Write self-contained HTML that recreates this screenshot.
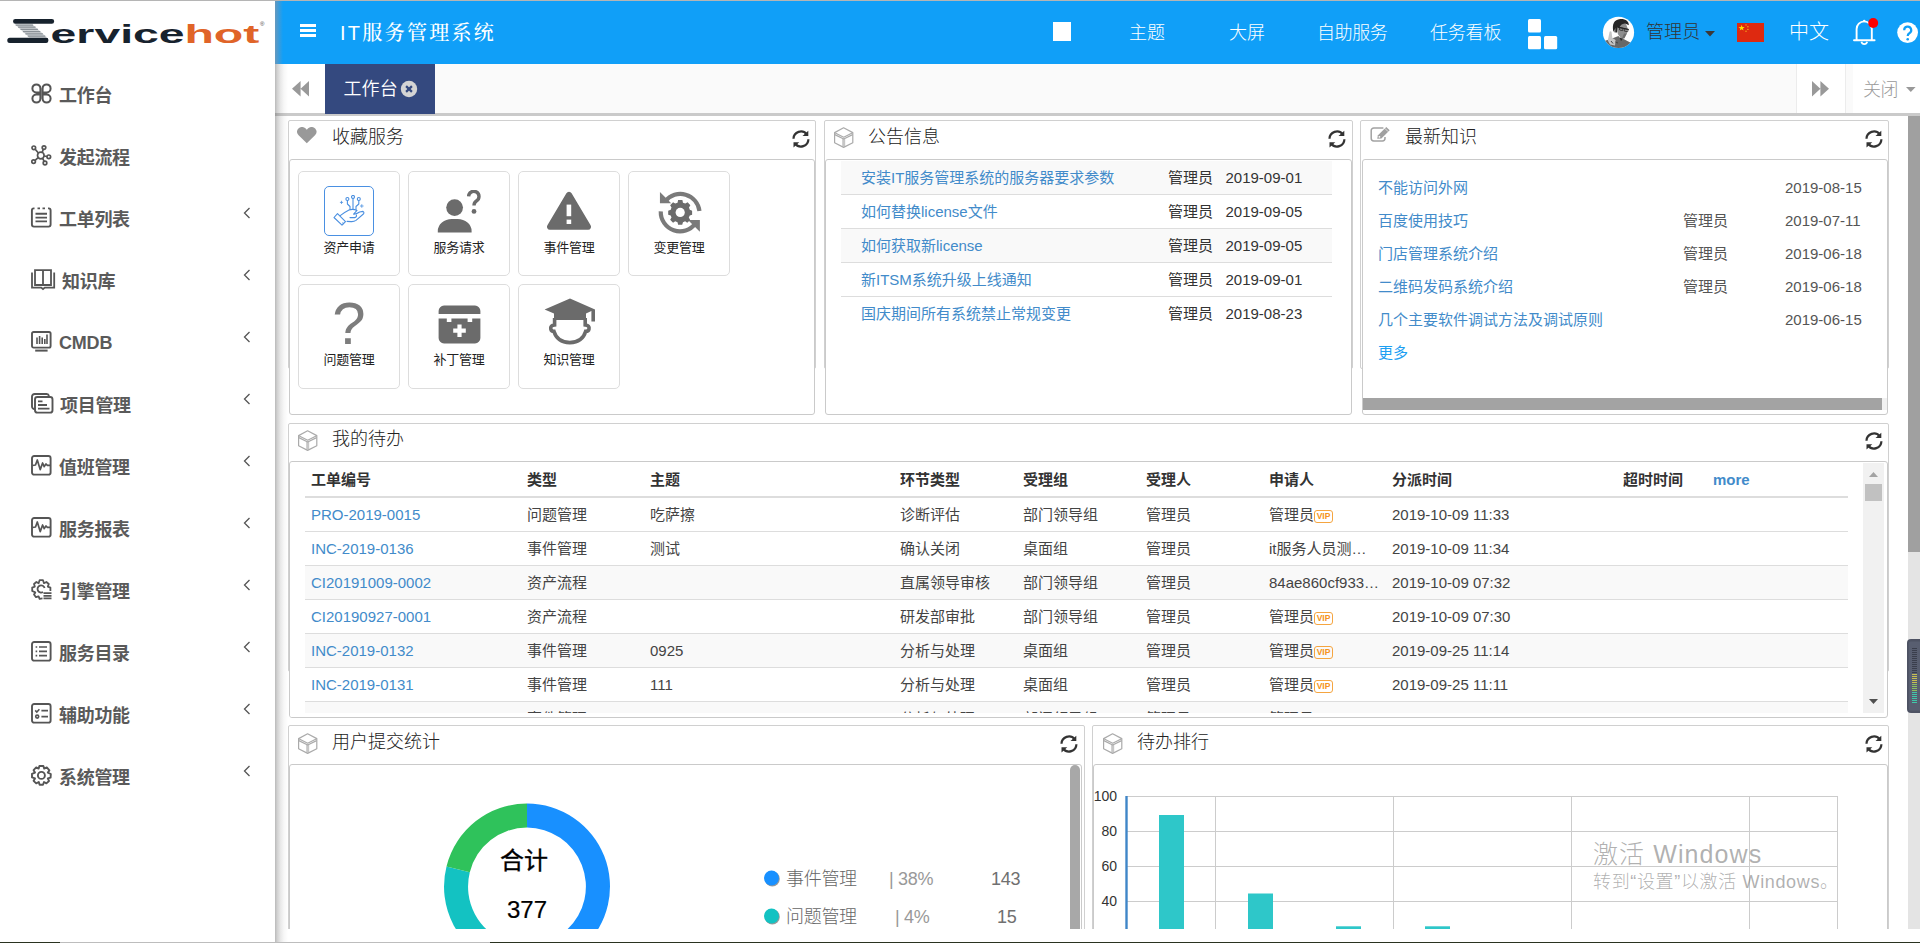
<!DOCTYPE html>
<html lang="zh-CN">
<head>
<meta charset="utf-8">
<title>IT服务管理系统</title>
<style>
*{box-sizing:border-box;margin:0;padding:0}
html,body{width:1920px;height:943px;overflow:hidden;background:#fff}
body{position:relative;font-family:"Liberation Sans","Noto Sans CJK SC",sans-serif;font-size:14px;color:#333}
.abs{position:absolute}
a{color:#428bca;text-decoration:none}
#topline{left:0;top:0;width:1920px;height:1px;background:#b5b5b5;z-index:50}
#botline{left:0;top:942px;width:1920px;height:1px;background:#2a3320;z-index:50}
#botline i{position:absolute;top:0;height:1px;background:#bdbdbd}
/* sidebar */
#side{left:0;top:1px;width:275px;height:941px;background:#fff;z-index:5}
#sideshadow{left:275px;top:64px;width:13px;height:878px;background:linear-gradient(to right,rgba(90,90,90,.42) 0,rgba(90,90,90,.27) 18%,rgba(90,90,90,.14) 42%,rgba(90,90,90,.05) 68%,rgba(90,90,90,0) 100%);z-index:20}
.mi{position:absolute;left:0;width:275px;height:30px;font-weight:bold;font-size:18px;color:#5a5a5a;line-height:30px}
.mi svg.ic{position:absolute;left:31px;top:3px;overflow:visible}
.mi span{position:absolute;left:59px;top:1px;white-space:nowrap;letter-spacing:-.3px}
.mi svg.ch{position:absolute;left:243px;top:3px}
/* header */
#hdr{left:275px;top:1px;width:1645px;height:63px;background:#109ff8;z-index:4}
#hdrshade{left:275px;top:1px;width:8px;height:63px;background:linear-gradient(to right,rgba(130,150,170,.75),rgba(16,159,248,0));z-index:6}
.hn{position:absolute;top:0;height:63px;line-height:64px;color:#fff;font-size:18px;font-weight:300;white-space:nowrap}
/* tabbar */
#tabbar{left:275px;top:64px;width:1645px;height:50px;background:#fafafa;z-index:3}
#tabline{left:275px;top:113.3px;width:1645px;height:2.4px;background:#cacaca;z-index:3}
#tab{left:325px;top:64px;width:110px;height:50px;background:#34497f;color:#fff;font-size:18px;line-height:51px;z-index:4;font-family:'Liberation Sans','Noto Sans CJK SC DemiLight','Noto Sans CJK SC',sans-serif}
/* content */
.panel{position:absolute;border:1px solid #d0d0d0;background:#fff;border-radius:2px}
.pbody{position:absolute;border:1px solid #cacaca;background:#fff;border-radius:3px;overflow:hidden}
.ptitle{position:absolute;font-size:17px;color:#222;white-space:nowrap;font-weight:300;line-height:24px}
.rf{position:absolute;width:18px;height:18px;overflow:visible}
</style>
</head>
<body>
<div id="topline" class="abs"></div>
<svg width="0" height="0" style="position:absolute">
<defs>
<g id="rfi"><path d="M2.5 8.7A7.4 7.4 0 0 1 15.7 4.3" fill="none" stroke="#333" stroke-width="2.2"/><path d="M17.3 .7V6H11.5Z" fill="#333"/><path d="M17.4 9.3A7.4 7.4 0 0 1 4.2 13.7" fill="none" stroke="#333" stroke-width="2.2"/><path d="M2.5 17.5V12.2H8.3Z" fill="#333"/></g>
<g id="cubei" fill="none" stroke="#aaa" stroke-width="1.2" stroke-linejoin="round"><path d="M10.7 11.4V19.6" stroke="#c6c6c6" stroke-width="3"/><path d="M10.6 .8L19.8 5.6V15.8L10.6 20.4L1.6 15.8V5.6Z"/><path d="M1.8 5.8L10.7 10.2L19.6 5.8"/><path d="M1.8 7.6L10.7 12L19.6 7.6"/></g>
</defs>
</svg>
<div id="side" class="abs">
<!-- logo -->
<svg class="abs" style="left:6px;top:14px" width="264" height="36" viewBox="0 0 264 36" role="img" aria-label="Servicehot"><title>Servicehot</title>
  <path d="M8.8 9.2H26.2L41.4 22.8H23.6Z" fill="#cfd3d6"/>
  <path d="M9.7 10.0h17.4M12.1 12.2h17.4M14.5 14.4h17.4M16.9 16.6h17.4M19.4 18.8h17.4M21.8 21.0h17.4" stroke="#8a9197" stroke-width="1.25" fill="none"/>
  <rect x="7.1" y="3.9" width="41" height="4.9" rx="2.2" fill="#17222d"/>
  <rect x="1.3" y="22.8" width="41" height="5.2" rx="2.5" fill="#17222d"/>
  <path d="M36 22.9L41.6 22.9L42.3 25L40 27.9Z" fill="#17222d"/>
  <text x="44.6" y="28" font-family="Liberation Sans, sans-serif" font-weight="bold" font-size="26.5" fill="#17222d" textLength="134" lengthAdjust="spacingAndGlyphs">ervice</text>
  <text x="178.4" y="28" font-family="Liberation Sans, sans-serif" font-weight="bold" font-size="26.5" fill="#e06428" textLength="75" lengthAdjust="spacingAndGlyphs">hot</text>
  <text x="254" y="11" font-family="Liberation Sans, sans-serif" font-size="6" fill="#444">®</text>
</svg>
<div class="mi" style="top:79px"><svg class="ic" width="21" height="21" viewBox="0 0 21 21" fill="none" stroke="#555" stroke-width="2.0"><path d="M9.4 9.4H5.4A4 4 0 1 1 9.4 5.4ZM11.6 9.4V5.4A4 4 0 1 1 15.6 9.4ZM9.4 11.6V15.6A4 4 0 1 1 5.4 11.6ZM11.6 11.6H15.6A4 4 0 1 1 11.6 15.6Z"/></svg><span>工作台</span></div>
<div class="mi" style="top:141px"><svg class="ic" width="21" height="21" viewBox="0 0 21 21" fill="none" stroke="#555" stroke-width="1.7"><circle cx="9.8" cy="10.5" r="3.3"/><circle cx="2.8" cy="2.8" r="1.8"/><circle cx="13" cy="2.6" r="1.8"/><circle cx="17.8" cy="11.8" r="1.8"/><circle cx="14" cy="18" r="1.8"/><circle cx="2.6" cy="16.6" r="1.8"/><path d="M4.2 4.2L7.4 8M12.3 4.3L11.2 7.4M16 11.5L13.1 11M13.2 16.4L11.6 13.4M4.1 15.4L7.1 12.7"/></svg><span>发起流程</span></div>
<div class="mi" style="top:203px"><svg class="ic" width="21" height="21" viewBox="0 0 21 21" fill="none" stroke="#555" stroke-width="1.9"><path d="M3.5 1.4H2.8A2 2 0 0 0 .9 3.4V17.6A2 2 0 0 0 2.9 19.6H17.6A2 2 0 0 0 19.6 17.6V3.4A2 2 0 0 0 17.7 1.4H17"/><path d="M6.5 1.4H9M11.5 1.4H14" /><path d="M4.5 6.8H16M4.5 10.6H16M4.5 14.4H16"/></svg><span>工单列表</span><svg class="ch" width="8" height="12" viewBox="0 0 8 12" fill="none" stroke="#555" stroke-width="1.3"><path d="M6.5 1L1.5 6L6.5 11"/></svg></div>
<div class="mi" style="top:265px"><svg class="ic" width="25" height="21" viewBox="0 0 25 21" fill="none" stroke="#555" stroke-width="1.8"><path d="M4 1.2H20V16H4ZM12 1.2V16"/><path d="M1 3.5V18.6H10.2L12 20L13.8 18.6H23.2V3.5"/></svg><span style="left:62px">知识库</span><svg class="ch" width="8" height="12" viewBox="0 0 8 12" fill="none" stroke="#555" stroke-width="1.3"><path d="M6.5 1L1.5 6L6.5 11"/></svg></div>
<div class="mi" style="top:327px"><svg class="ic" width="21" height="21" viewBox="0 0 21 21" fill="none" stroke="#555" stroke-width="1.9"><rect x="1" y="1" width="18.6" height="15.6" rx="1.6"/><path d="M4.2 19.6H16.6" stroke-width="2.0"/><path d="M6 6.5V13M8.6 5V13M11.2 6.5V13M13.8 8V13M16 3.5V13" stroke-width="1.6"/></svg><span style="top:0;letter-spacing:-.2px">CMDB</span><svg class="ch" width="8" height="12" viewBox="0 0 8 12" fill="none" stroke="#555" stroke-width="1.3"><path d="M6.5 1L1.5 6L6.5 11"/></svg></div>
<div class="mi" style="top:389px"><svg class="ic" width="23" height="21" viewBox="0 0 23 21" fill="none" stroke="#555" stroke-width="1.9"><path d="M3.6 16.2A2.6 2.6 0 0 1 1 13.6V3.6A2.6 2.6 0 0 1 3.6 1H15.6A2.6 2.6 0 0 1 18 3"/><rect x="4" y="4" width="17.5" height="15.6" rx="2.4"/><path d="M7 8.4H11.5M7 12H16M7 15.6H18.5" stroke-width="1.8"/></svg><span style="left:60px">项目管理</span><svg class="ch" width="8" height="12" viewBox="0 0 8 12" fill="none" stroke="#555" stroke-width="1.3"><path d="M6.5 1L1.5 6L6.5 11"/></svg></div>
<div class="mi" style="top:451px"><svg class="ic" width="21" height="21" viewBox="0 0 21 21" fill="none" stroke="#555" stroke-width="1.9"><rect x="1" y="1" width="18.6" height="18.6" rx="2.2"/><path d="M1.5 10.5L4.5 10L6.3 5L9.2 14.6L11.6 8L13.2 11.6L15 9L16.4 10.4H19" stroke-width="1.7" stroke-linejoin="round"/></svg><span>值班管理</span><svg class="ch" width="8" height="12" viewBox="0 0 8 12" fill="none" stroke="#555" stroke-width="1.3"><path d="M6.5 1L1.5 6L6.5 11"/></svg></div>
<div class="mi" style="top:513px"><svg class="ic" width="21" height="21" viewBox="0 0 21 21" fill="none" stroke="#555" stroke-width="1.9"><rect x="1" y="1" width="18.6" height="18.6" rx="2.2"/><path d="M1.5 10.5L4.5 10L6.3 5L9.2 14.6L11.6 8L13.2 11.6L15 9L16.4 10.4H19" stroke-width="1.7" stroke-linejoin="round"/></svg><span>服务报表</span><svg class="ch" width="8" height="12" viewBox="0 0 8 12" fill="none" stroke="#555" stroke-width="1.3"><path d="M6.5 1L1.5 6L6.5 11"/></svg></div>
<div class="mi" style="top:575px"><svg class="ic" width="21" height="21" viewBox="0 0 21 21" fill="none" stroke="#555" stroke-width="1.8" stroke-linejoin="round"><path d="M11.5 19.4L8.6 19.8L7.6 17.3L5 18.2L3 15.4L4.3 13.4L1.2 12L1.2 8.6L3.8 7.6L3 5L5.4 3L7.6 4.2L8.6 1.2H12L13 4.2L15.4 3L17.8 5L16.8 7.6L19.4 8.6V12"/><path d="M12 13A3.6 3.6 0 1 1 13.6 9"/><path d="M12.5 14.2H20.5M12.5 16.8H20.5M12.5 19.4H20.5" stroke-width="1.7"/></svg><span>引擎管理</span><svg class="ch" width="8" height="12" viewBox="0 0 8 12" fill="none" stroke="#555" stroke-width="1.3"><path d="M6.5 1L1.5 6L6.5 11"/></svg></div>
<div class="mi" style="top:637px"><svg class="ic" width="21" height="21" viewBox="0 0 21 21" fill="none" stroke="#555" stroke-width="1.9"><rect x="1" y="1" width="18.6" height="18.6" rx="2.2"/><path d="M8 6H16M8 10.3H16M8 14.6H16" stroke-width="1.7"/><path d="M4.6 6H6.2M4.6 10.3H6.2M4.6 14.6H6.2" stroke-width="1.7"/></svg><span>服务目录</span><svg class="ch" width="8" height="12" viewBox="0 0 8 12" fill="none" stroke="#555" stroke-width="1.3"><path d="M6.5 1L1.5 6L6.5 11"/></svg></div>
<div class="mi" style="top:699px"><svg class="ic" width="21" height="21" viewBox="0 0 21 21" fill="none" stroke="#555" stroke-width="1.9"><rect x="1" y="1" width="18.6" height="18.6" rx="2.2"/><path d="M4.2 7.4L5.8 9L8.4 6.2" stroke-width="1.6"/><circle cx="6.2" cy="13.6" r="1.5" stroke-width="1.6"/><path d="M10.4 7.6H17M10.4 13.6H17" stroke-width="1.7"/></svg><span>辅助功能</span><svg class="ch" width="8" height="12" viewBox="0 0 8 12" fill="none" stroke="#555" stroke-width="1.3"><path d="M6.5 1L1.5 6L6.5 11"/></svg></div>
<div class="mi" style="top:761px"><svg class="ic" width="21" height="21" viewBox="0 0 21 21" fill="none" stroke="#555" stroke-width="1.9" stroke-linejoin="round"><path d="M8.4 1H12.4L13.2 3.6L15.8 2.4L18.4 5.4L16.8 7.6L19.8 9L19.6 12.6L16.8 13.4L18 16L15.4 18.4L13 17L12 19.8H8.6L7.8 17L5.2 18.4L2.6 15.8L4 13.4L1 12.4V8.8L4 7.6L2.6 5.2L5.2 2.4L7.6 3.6Z"/><circle cx="10.4" cy="10.4" r="3.5"/></svg><span>系统管理</span><svg class="ch" width="8" height="12" viewBox="0 0 8 12" fill="none" stroke="#555" stroke-width="1.3"><path d="M6.5 1L1.5 6L6.5 11"/></svg></div>
</div>
<div id="hdr" class="abs">
  <!-- coordinates inside hdr are page x-275, page y-1 -->
  <svg class="abs" style="left:25px;top:23px" width="16" height="13" viewBox="0 0 16 13"><path d="M0 0H16V3H0ZM0 5H16V8H0ZM0 10H16V13H0Z" fill="#fff"/></svg>
  <div class="abs" style="left:65px;top:0;height:63px;line-height:64px;color:#fff;font-family:'Liberation Sans','Noto Serif CJK SC',serif;font-size:20px;letter-spacing:2.3px;white-space:nowrap;font-weight:500">IT服务管理系统</div>
  <div class="abs" style="left:778px;top:21px;width:18px;height:19px;background:#fff"></div>
  <div class="hn" style="left:854px">主题</div>
  <div class="hn" style="left:954px">大屏</div>
  <div class="hn" style="left:1042px;letter-spacing:-.4px">自助服务</div>
  <div class="hn" style="left:1155px;letter-spacing:-.2px">任务看板</div>
  <svg class="abs" style="left:1253px;top:18px" width="30" height="31" viewBox="0 0 30 31" fill="#fff"><rect x="0" y="0" width="13" height="13.4" rx="1.5"/><rect x="0" y="17" width="13" height="13.2" rx="1.5"/><rect x="16" y="17" width="13.2" height="13.2" rx="1.5"/></svg>
  <!-- avatar -->
  <svg class="abs" style="left:1327px;top:15px" width="33" height="33" viewBox="0 0 33 33">
    <defs><clipPath id="avc"><circle cx="16.5" cy="16.4" r="15.6"/></clipPath></defs>
    <circle cx="16.5" cy="16.4" r="15.6" fill="#fefefe"/>
    <g clip-path="url(#avc)">
      <path d="M3 24.8L10 22.4L16.5 20L19 23.6L21.6 23L28.2 26.6L31 33H2Z" fill="#686868"/>
      <path d="M15.4 11C17 7.4 21 6.8 24.2 8.2L25.6 12.2L25 17.2L22.2 22.4L19 22.4L15.8 18Z" fill="#8e8e8e"/>
      <path d="M22 17.5L24.6 17.8L22.4 22.2L20 22.4Z" fill="#6e6e6e"/>
      <ellipse cx="12.9" cy="14.2" rx="1.5" ry="2.4" fill="#8a8a8a"/>
      <path d="M11.4 15.4C9.8 8.4 12 3.4 18.3 2.9C23.4 2.6 27.2 5.2 26.8 9.2L24.4 8C21.6 7 19 8 17.6 11L15.6 11.6L15.2 16.4L13.4 16.4L13.6 12Z" fill="#262626"/>
      <path d="M16 11.1L26.8 13.5" stroke="#1e1e1e" stroke-width="1.2" fill="none"/>
      <path d="M17.4 11.6L21 12.4L20.6 14.6L17.6 14ZM22.4 12.8L26.2 13.6L25.6 15.8L22.2 15Z" fill="none" stroke="#2a2a2a" stroke-width=".8"/>
      <path d="M17.4 21.4L19 25L21.2 22.8Z" fill="#2c2c2c"/>
      <path d="M7.6 15.8Q8.5 14.6 9.5 15.8L10.4 22L13.6 24L13 29.6L8 28.6L5.8 24.4Z" fill="#c4c4c4"/>
      <path d="M9 25L11 27.5M13.5 26L16 27" stroke="#444" stroke-width="1" fill="none"/>
    </g>
  </svg>
  <div class="hn" style="left:1371px;color:#333;letter-spacing:.1px;line-height:63px">管理员</div>
  <svg class="abs" style="left:1430px;top:30px" width="10" height="6" viewBox="0 0 10 6"><path d="M0 0H10L5 5.4Z" fill="#3c3838"/></svg>
  <svg class="abs" style="left:1462px;top:22px" width="27" height="19" viewBox="0 0 27 19"><rect width="27" height="19" fill="#de2910"/><path d="M4.6 1.8L5.4 4H7.7L5.9 5.4L6.6 7.6L4.6 6.3L2.7 7.6L3.4 5.4L1.5 4H3.9Z" fill="#ffde00"/><g fill="#f6b21a"><circle cx="9" cy="1.9" r=".7"/><circle cx="10.9" cy="3.7" r=".7"/><circle cx="10.9" cy="6.4" r=".7"/><circle cx="9" cy="8.2" r=".7"/></g></svg>
  <div class="hn" style="left:1514px;font-size:20px;line-height:63px">中文</div>
  <svg class="abs" style="left:1577px;top:13px" width="30" height="32" viewBox="0 0 30 32"><path d="M2 26.2H22.6M4.6 26V15A7.6 7.6 0 0 1 19.8 15V26" fill="none" stroke="#fff" stroke-width="1.9" stroke-linecap="round"/><path d="M9.4 27.8A3 3 0 0 0 15.2 27.8" fill="none" stroke="#fff" stroke-width="1.7"/><circle cx="12.2" cy="7" r="1.2" fill="#fff"/><circle cx="21.2" cy="9" r="5" fill="#ff0000"/></svg>
  <svg class="abs" style="left:1622px;top:21px" width="22" height="22" viewBox="0 0 22 22"><circle cx="10.6" cy="10.6" r="10.4" fill="#fff"/><path d="M7.2 8.2A3.5 3.5 0 1 1 12.4 11.2Q10.7 12.2 10.7 14" fill="none" stroke="#109ff8" stroke-width="2.2"/><circle cx="10.7" cy="17.2" r="1.3" fill="#109ff8"/></svg>
</div>
<div id="hdrshade" class="abs"></div>
<div id="tabbar" class="abs">
  <div class="abs" style="left:0;top:0;width:50px;height:50px;background:#fff"></div>
  <svg class="abs" style="left:17px;top:17px" width="18" height="16" viewBox="0 0 18 16" fill="#999"><path d="M8.6 0V15.6L0 7.8ZM17 0V15.6L8.6 7.8Z"/></svg>
  <div class="abs" style="left:1521px;top:0;width:50px;height:50px;background:#fff;border-left:1px solid #ececec;border-right:1px solid #ececec"></div>
  <svg class="abs" style="left:1537px;top:17px" width="18" height="16" viewBox="0 0 18 16" fill="#999"><path d="M0 0V15.6L8.4 7.8ZM8.4 0V15.6L17 7.8Z"/></svg>
  <div class="abs" style="left:1578px;top:0;width:67px;height:50px;background:#fff"></div>
  <div class="abs" style="left:1588px;top:0;height:50px;line-height:52px;font-size:18px;color:#999;font-weight:300;letter-spacing:-.5px">关闭</div>
  <svg class="abs" style="left:1631px;top:23px" width="10" height="6" viewBox="0 0 10 6"><path d="M0 0H9.6L4.8 5Z" fill="#999"/></svg>
</div>
<div id="tabline" class="abs"></div>
<div id="tab" class="abs"><span class="abs" style="left:18.5px;top:0;letter-spacing:.1px">工作台</span>
  <svg class="abs" style="left:75px;top:16px" width="18" height="18" viewBox="0 0 18 18"><circle cx="9" cy="9" r="8.2" fill="#d4d4d4"/><path d="M6.1 6.1L11.9 11.9M11.9 6.1L6.1 11.9" stroke="#34497f" stroke-width="2.2"/></svg>
</div>
<div id="sideshadow" class="abs"></div>
<style>
.card{position:absolute;width:102px;height:105px;border:1px solid #ddd;border-radius:5px;background:#fff}
.card .lb{position:absolute;left:0;width:100px;top:67px;text-align:center;font-size:13px;color:#222;line-height:18px;letter-spacing:-.3px}
.card svg{position:absolute}
.nrow{position:absolute;left:15px;width:491px;height:34px;border-bottom:1px solid #ddd;font-size:15px;line-height:33px;white-space:nowrap}
.nrow a{position:absolute;left:20px}
.nrow .u{position:absolute;left:327px;color:#333}
.nrow .d{position:absolute;left:384.5px;color:#333;font-size:15px}
.krow{position:absolute;left:0;width:524px;height:33px;font-size:15px;line-height:33px;white-space:nowrap}
.krow a{position:absolute;left:15px}
.krow .u{position:absolute;left:320px;color:#555}
.krow .d{position:absolute;left:422px;color:#555;font-size:15px}
</style>
<!-- Panel 1 : 收藏服务 -->
<div class="panel" style="left:288px;top:120px;width:528px;height:249px"></div>
<svg class="abs" style="left:297.4px;top:127px" width="19.6" height="16.6" viewBox="0 0 20 17"><path d="M10 16.6L1.6 8.4A5 5 0 0 1 1.4 1.6A5 5 0 0 1 8.6 1.4L10 2.8L11.4 1.4A5 5 0 0 1 18.6 1.6A5 5 0 0 1 18.4 8.4Z" fill="#999"/></svg>
<div class="ptitle" style="left:332px;top:125px;font-size:18px">收藏服务</div>
<svg class="rf" style="left:790.5px;top:130px" viewBox="0 0 18 18"><use href="#rfi"/></svg>
<div class="pbody" style="left:289px;top:159px;width:526px;height:256px">
  <!-- coords inside pbody: page x-291, page y-160 -->
  <div class="card" style="left:8px;top:11px">
    <div class="abs" style="left:25px;top:14px;width:50px;height:50px;border:1px solid #4a90e2;border-radius:5px"></div>
    <svg style="left:34px;top:23px" width="33" height="33" viewBox="0 0 33 33" fill="none" stroke="#4a8fe0" stroke-width="1.1" stroke-linecap="round" stroke-linejoin="round">
      <circle cx="14.4" cy="4" r="1.5"/><circle cx="20" cy="1.9" r="1.5"/><circle cx="25.8" cy="4" r="1.5"/>
      <path d="M14.4 5.6V9L17 11.5V14.5M20 3.5V14M25.8 5.6V9L23 11.5V14.5"/>
      <path d="M8.5 6.2V8.6M7.3 7.4H9.7M28.8 9.6V12.4M27.4 11H30.2" stroke-width=".8"/>
      <path d="M1 22.5L4.5 18.6L12.5 26.6L9 30.2Z"/><path d="M9.8 27.8L10.6 28.6"/>
      <path d="M7.2 20.6Q12 17 16 15Q20 13.5 24 15.4L20.6 19.2Q23 19.4 26.6 17L30 16.4Q31.6 17.6 30.4 19L23 25.4Q21 26.8 18 26.6L14 26.4"/>
      <path d="M17 22.6H21.6Q24 22 23.4 20"/>
    </svg>
    <div class="lb">资产申请</div>
  </div>
  <div class="card" style="left:118px;top:11px">
    <svg style="left:28px;top:18px" width="46" height="44" viewBox="0 0 46 44" fill="#6b6b6b"><circle cx="17.6" cy="17.6" r="8.4"/><path d="M.8 42.6V41A14 12 0 0 1 14.8 29H20.6A14 12 0 0 1 34.6 41V42.6Z"/><path d="M31.6 6.4A5.2 5.2 0 1 1 39.4 11Q37 12.6 37 15.6" fill="none" stroke="#6b6b6b" stroke-width="3.4"/><circle cx="37" cy="21.4" r="2.4"/></svg>
    <div class="lb">服务请求</div>
  </div>
  <div class="card" style="left:228px;top:11px">
    <svg style="left:27px;top:19px" width="46" height="40" viewBox="0 0 46 40"><path d="M20.4 2.2A3 3 0 0 1 25.6 2.2L44.6 34.2A3 3 0 0 1 42 38.8H4A3 3 0 0 1 1.4 34.2Z" fill="#6b6b6b"/><rect x="20.6" y="13.6" width="4.6" height="11.6" fill="#fff"/><rect x="20.6" y="28.6" width="4.6" height="4.4" fill="#fff"/></svg>
    <div class="lb">事件管理</div>
  </div>
  <div class="card" style="left:338px;top:11px">
    <svg style="left:28px;top:17px" width="46" height="46" viewBox="0 0 44 44"><g fill="none" stroke="#7a7a7a" stroke-width="4"><path d="M8 11.6A18.4 18.4 0 0 1 40.6 21"/><path d="M36.8 33A18.4 18.4 0 0 1 3.6 21.4"/></g><path d="M2.8 2.8V13.6H13.6Z" fill="#7a7a7a"/><path d="M41 41V29.6H29.6Z" fill="#7a7a7a"/><path d="M20 11H24.4L25 13.6L27.4 14.6L29.8 13.2L32.6 16.4L31.2 18.6L32 21L34.4 22V26L32 26.8L31 29L32.4 31.4L29.4 34.2L27.2 32.8L25 33.8L24.2 36.4H20L19.4 33.8L17 32.8L14.8 34.2L11.8 31.2L13.2 29L12.4 26.8L9.8 26V22L12.4 21L13.2 18.6L11.8 16.2L14.8 13.2L17 14.6L19.4 13.6Z" fill="#6b6b6b" transform="translate(1.6 .4) scale(.93)"/><circle cx="22.2" cy="22.4" r="4.4" fill="#fff"/></svg>
    <div class="lb">变更管理</div>
  </div>
  <div class="card" style="left:8px;top:124px">
    <div class="abs" style="left:0;top:6px;width:100px;text-align:center;font-size:60px;line-height:66px;color:#7d7d7d;font-family:'Liberation Sans',sans-serif">?</div>
    <div class="lb" style="top:66px">问题管理</div>
  </div>
  <div class="card" style="left:118px;top:124px">
    <svg style="left:29px;top:20px" width="44" height="40" viewBox="0 0 44 40" fill="#6b6b6b"><path d="M.6 9V6A5.4 5.4 0 0 1 6 .6H37A5.4 5.4 0 0 1 42.4 6V9Z"/><path d="M.6 13.4H8.8V17H13.4V13.4H29.6V17H34.2V13.4H42.4V33A5.4 5.4 0 0 1 37 38.4H6A5.4 5.4 0 0 1 .6 33Z"/><path d="M19.4 19.4H23.6V23.6H27.8V27.8H23.6V32H19.4V27.8H15.2V23.6H19.4Z" fill="#fff"/></svg>
    <div class="lb" style="top:66px">补丁管理</div>
  </div>
  <div class="card" style="left:228px;top:124px">
    <svg style="left:25px;top:13px" width="52" height="48" viewBox="0 0 52 48"><path d="M26 .4L51 11.4V23.6H47.4V13L42 15.4V22H10V15.4L.6 11.4Z" fill="#6b6b6b"/><path d="M10.6 20V27Q6 27.5 6.8 31Q7.4 33.6 10 33.4Q13 44 25.8 44.6Q38.6 44 41.6 33.4Q44.4 33.6 45 31Q45.8 27.5 41.2 27V20" fill="none" stroke="#6b6b6b" stroke-width="3.6"/></svg>
    <div class="lb" style="top:66px">知识管理</div>
  </div>
</div>
<!-- Panel 2 : 公告信息 -->
<div class="panel" style="left:824px;top:120px;width:529px;height:249px"></div>
<svg class="abs" style="left:833px;top:127px" width="21" height="21" viewBox="0 0 21 21"><use href="#cubei"/></svg>
<div class="ptitle" style="left:868px;top:125px;font-size:18px">公告信息</div>
<svg class="rf" style="left:1327px;top:130px" viewBox="0 0 18 18"><use href="#rfi"/></svg>
<div class="pbody" style="left:825px;top:159px;width:527px;height:256px">
  <div class="nrow" style="top:1px;background:#f9f9f9"><a>安装IT服务管理系统的服务器要求参数</a><span class="u">管理员</span><span class="d">2019-09-01</span></div>
  <div class="nrow" style="top:35px"><a>如何替换license文件</a><span class="u">管理员</span><span class="d">2019-09-05</span></div>
  <div class="nrow" style="top:69px;background:#f9f9f9"><a>如何获取新license</a><span class="u">管理员</span><span class="d">2019-09-05</span></div>
  <div class="nrow" style="top:103px"><a>新ITSM系统升级上线通知</a><span class="u">管理员</span><span class="d">2019-09-01</span></div>
  <div class="nrow" style="top:137px;border-bottom:0"><a>国庆期间所有系统禁止常规变更</a><span class="u">管理员</span><span class="d">2019-08-23</span></div>
</div>
<!-- Panel 3 : 最新知识 -->
<div class="panel" style="left:1360px;top:120px;width:529px;height:249px"></div>
<svg class="abs" style="left:1369px;top:125px;overflow:visible" width="22" height="20" viewBox="0 0 22 20" fill="none" stroke="#a2a2a2" stroke-width="1.5"><path d="M14.4 2.9H4.8A2.6 2.6 0 0 0 2.2 5.5V13.3A2.6 2.6 0 0 0 4.8 15.9H13.4A2.6 2.6 0 0 0 16 13.3V12"/><path d="M8.2 13.8L9 10.2L17.3 1.9L20.7 5.3L12.4 13.6Z" fill="#a0a0a0" stroke="none"/><path d="M15.9 3.4L19.2 6.7" stroke="#fff" stroke-width=".7"/><circle cx="10.4" cy="11.8" r=".9" fill="#fff" stroke="none"/></svg>
<div class="ptitle" style="left:1405px;top:125px;font-size:18px">最新知识</div>
<svg class="rf" style="left:1863.5px;top:130px" viewBox="0 0 18 18"><use href="#rfi"/></svg>
<div class="pbody" style="left:1362px;top:159px;width:526px;height:256px">
  <div class="krow" style="top:11px"><a>不能访问外网</a><span class="d">2019-08-15</span></div>
  <div class="krow" style="top:44px"><a>百度使用技巧</a><span class="u">管理员</span><span class="d">2019-07-11</span></div>
  <div class="krow" style="top:77px"><a>门店管理系统介绍</a><span class="u">管理员</span><span class="d">2019-06-18</span></div>
  <div class="krow" style="top:110px"><a>二维码发码系统介绍</a><span class="u">管理员</span><span class="d">2019-06-18</span></div>
  <div class="krow" style="top:143px"><a>几个主要软件调试方法及调试原则</a><span class="d">2019-06-15</span></div>
  <div class="krow" style="top:176px"><a style="color:#1e9ff2">更多</a></div>
  <div class="abs" style="left:0;top:238px;width:524px;height:12px;background:#f1f1f1"></div>
  <div class="abs" style="left:0;top:238px;width:519px;height:12px;background:#a3a3a3"></div>
</div>
<style>
.trow{position:absolute;left:15px;width:1543px;height:34px;border-bottom:1px solid #ddd;font-size:15px;line-height:33px;color:#444;white-space:nowrap}
.trow.g{background:#f9f9f9}
.trow.h{font-weight:bold;color:#333;border-bottom:2px solid #ddd;height:36px;line-height:36px}
.trow span,.trow a{position:absolute;top:0}
.c1{left:6px}.c2{left:222px}.c3{left:345px}.c4{left:595px}.c5{left:718px}.c6{left:841px}.c7{left:964px}.c8{left:1087px}.c9{left:1318px}.c10{left:1408px}
.vip{display:inline-block;position:relative;top:-1px;vertical-align:baseline;font-style:normal;margin-left:0;width:19px;height:13px;border:1px solid #f5a540;border-radius:3px;color:#f59320;font-size:8.5px;line-height:11.5px;text-align:center;font-weight:bold;font-family:"Liberation Sans",sans-serif;letter-spacing:0}
</style>
<!-- Panel 4 : 我的待办 -->
<div class="panel" style="left:288px;top:423px;width:1601px;height:249px"></div>
<svg class="abs" style="left:297px;top:430px" width="21" height="21" viewBox="0 0 21 21"><use href="#cubei"/></svg>
<div class="ptitle" style="left:332px;top:427px;font-size:18px">我的待办</div>
<svg class="rf" style="left:1863.5px;top:432px" viewBox="0 0 18 18"><use href="#rfi"/></svg>
<div class="pbody" style="left:289px;top:461px;width:1599px;height:257px">
  <!-- inside: page x-291, page y-462 -->
  <div class="trow h" style="top:0"><span class="c1">工单编号</span><span class="c2">类型</span><span class="c3">主题</span><span class="c4">环节类型</span><span class="c5">受理组</span><span class="c6">受理人</span><span class="c7">申请人</span><span class="c8">分派时间</span><span class="c9">超时时间</span><a class="c10">more</a></div>
  <div class="trow" style="top:36px"><a class="c1">PRO-2019-0015</a><span class="c2">问题管理</span><span class="c3">吃萨擦</span><span class="c4">诊断评估</span><span class="c5">部门领导组</span><span class="c6">管理员</span><span class="c7">管理员<i class="vip">VIP</i></span><span class="c8">2019-10-09 11:33</span></div>
  <div class="trow" style="top:70px"><a class="c1">INC-2019-0136</a><span class="c2">事件管理</span><span class="c3">测试</span><span class="c4">确认关闭</span><span class="c5">桌面组</span><span class="c6">管理员</span><span class="c7">it服务人员测…</span><span class="c8">2019-10-09 11:34</span></div>
  <div class="trow g" style="top:104px"><a class="c1">CI20191009-0002</a><span class="c2">资产流程</span><span class="c4">直属领导审核</span><span class="c5">部门领导组</span><span class="c6">管理员</span><span class="c7">84ae860cf933…</span><span class="c8">2019-10-09 07:32</span></div>
  <div class="trow" style="top:138px"><a class="c1">CI20190927-0001</a><span class="c2">资产流程</span><span class="c4">研发部审批</span><span class="c5">部门领导组</span><span class="c6">管理员</span><span class="c7">管理员<i class="vip">VIP</i></span><span class="c8">2019-10-09 07:30</span></div>
  <div class="trow g" style="top:172px"><a class="c1">INC-2019-0132</a><span class="c2">事件管理</span><span class="c3">0925</span><span class="c4">分析与处理</span><span class="c5">桌面组</span><span class="c6">管理员</span><span class="c7">管理员<i class="vip">VIP</i></span><span class="c8">2019-09-25 11:14</span></div>
  <div class="trow" style="top:206px"><a class="c1">INC-2019-0131</a><span class="c2">事件管理</span><span class="c3">111</span><span class="c4">分析与处理</span><span class="c5">桌面组</span><span class="c6">管理员</span><span class="c7">管理员<i class="vip">VIP</i></span><span class="c8">2019-09-25 11:11</span></div>
  <div class="trow g" style="top:240px"><a class="c1">INC-2019-0130</a><span class="c2">事件管理</span><span class="c3"></span><span class="c4">分析与处理</span><span class="c5">部门领导组</span><span class="c6">管理员</span><span class="c7">管理员</span><span class="c8">2019-09-25 11:10</span></div>
  <div class="abs" style="left:0;top:251px;width:1573px;height:6px;background:#fff"></div>
  <!-- scrollbar -->
  <div class="abs" style="left:1573px;top:1px;width:21px;height:250px;background:#f1f1f1"></div>
  <svg class="abs" style="left:1579px;top:10px" width="9" height="5" viewBox="0 0 9 5"><path d="M0 5H9L4.5 0Z" fill="#a3a3a3"/></svg>
  <div class="abs" style="left:1575px;top:22px;width:17px;height:17px;background:#c1c1c1"></div>
  <svg class="abs" style="left:1579px;top:237px" width="9" height="5" viewBox="0 0 9 5"><path d="M0 0H9L4.5 5Z" fill="#505050"/></svg>
</div>
<!-- Panel 5 : 用户提交统计 -->
<div class="panel" style="left:288px;top:725px;width:797px;height:250px"></div>
<svg class="abs" style="left:297px;top:733px" width="21" height="21" viewBox="0 0 21 21"><use href="#cubei"/></svg>
<div class="ptitle" style="left:332px;top:730px;font-size:18px">用户提交统计</div>
<svg class="rf" style="left:1058.5px;top:735px" viewBox="0 0 18 18"><use href="#rfi"/></svg>
<div class="pbody" style="left:289px;top:764px;width:793px;height:260px"></div>
<svg class="abs" style="left:0;top:0" width="1920" height="943" viewBox="0 0 1920 943">
  <path d="M527.0 803.5A83.0 83.0 0 0 1 583.6 947.2L567.2 929.6A59.0 59.0 0 0 0 527.0 827.5Z" fill="#1890ff"/>
  <path d="M498.6 964.5A83.0 83.0 0 0 1 446.5 866.4L469.8 872.2A59.0 59.0 0 0 0 506.8 941.9Z" fill="#13c2c2"/>
  <path d="M446.5 866.4A83.0 83.0 0 0 1 527.0 803.5L527.0 827.5A59.0 59.0 0 0 0 469.8 872.2Z" fill="#2fc25b"/>
  <circle cx="772.3" cy="878.9" r="7.5" fill="#9a9a9a"/><circle cx="772.3" cy="916.9" r="7.5" fill="#9a9a9a"/><circle cx="771.5" cy="878" r="7.5" fill="#1890ff"/>
  <circle cx="771.5" cy="916" r="7.5" fill="#13c2c2"/>
</svg>
<div class="abs" style="left:474px;top:843px;width:100px;text-align:center;font-size:24px;line-height:36px;color:#000;font-weight:400;-webkit-text-stroke:.35px #000">合计</div>
<div class="abs" style="left:477px;top:893px;width:100px;text-align:center;font-size:24px;line-height:34px;color:#000;-webkit-text-stroke:.2px #000">377</div>
<div class="abs lg" style="left:786px;top:865px;color:#666">事件管理</div>
<div class="abs lg" style="left:889px;top:865px;color:#999">| 38%</div>
<div class="abs lg" style="left:991px;top:865px;color:#707070">143</div>
<div class="abs lg" style="left:786px;top:903px;color:#666">问题管理</div>
<div class="abs lg" style="left:895px;top:903px;color:#999">| 4%</div>
<div class="abs lg" style="left:997px;top:903px;color:#707070">15</div>
<style>.lg{font-size:18px;line-height:28px;font-weight:300;white-space:nowrap;letter-spacing:-.3px}</style>
<div class="abs" style="left:1070px;top:765px;width:10px;height:200px;border-radius:5px;background:#a8a8a8"></div>
<!-- Panel 6 : 待办排行 -->
<div class="panel" style="left:1092px;top:725px;width:797px;height:250px"></div>
<svg class="abs" style="left:1102px;top:733px" width="21" height="21" viewBox="0 0 21 21"><use href="#cubei"/></svg>
<div class="ptitle" style="left:1137px;top:730px;font-size:18px">待办排行</div>
<svg class="rf" style="left:1863.5px;top:735px" viewBox="0 0 18 18"><use href="#rfi"/></svg>
<div class="pbody" style="left:1093px;top:764px;width:795px;height:260px"></div>
<svg class="abs" style="left:0;top:0" width="1920" height="943" viewBox="0 0 1920 943">
  <g stroke="#ccc" stroke-width="1" fill="none">
    <path d="M1127 796.5H1838M1127 831.5H1838M1127 866.5H1838M1127 901.5H1838"/>
    <path d="M1215.5 796V943M1393.5 796V943M1571.5 796V943M1749.5 796V943M1837.5 796V943"/>
  </g>
  <path d="M1126.5 796V943" stroke="#3f86c8" stroke-width="2.4"/>
  <g fill="#2ec7c9"><rect x="1159" y="815" width="25" height="128"/><rect x="1248" y="893.5" width="25" height="50"/><rect x="1336" y="926.3" width="25" height="17"/><rect x="1425" y="926.3" width="25" height="17"/></g>
  <g font-family="Liberation Sans, sans-serif" font-size="14" fill="#333" text-anchor="end"><text x="1117" y="801">100</text><text x="1117" y="836">80</text><text x="1117" y="871">60</text><text x="1117" y="906">40</text></g>
</svg>
<div class="abs" style="left:1593px;top:837px;font-size:25px;line-height:34px;color:rgba(110,110,110,.55);font-weight:300;white-space:nowrap;letter-spacing:1.1px;font-family:'Liberation Sans','Noto Sans CJK SC',sans-serif">激活 Windows</div>
<div class="abs" style="left:1593px;top:869px;font-size:18px;line-height:26px;color:rgba(110,110,110,.55);font-weight:300;white-space:nowrap;letter-spacing:.65px">转到“设置”以激活 Windows。</div>
<!-- bottom clip + right scrollbar -->
<div class="abs" style="left:275px;top:929px;width:1645px;height:13px;background:#fff;z-index:10"></div>
<div class="abs" style="left:1908px;top:116px;width:12px;height:813px;background:#e4e4e4;z-index:11"></div>
<div class="abs" style="left:1908px;top:116px;width:12px;height:436px;background:#a0a0a0;z-index:12"></div>
<svg class="abs" style="left:1907px;top:639px;z-index:13" width="13" height="74" viewBox="0 0 13 74"><path d="M13 0H4A4 4 0 0 0 0 4V70A4 4 0 0 0 4 74H13Z" fill="#4d5263"/><path d="M3.4 2.4H13V71.6H3.4A1.6 1.6 0 0 1 1.8 70V4A1.6 1.6 0 0 1 3.4 2.4Z" fill="#585e70"/>
<g stroke-width="1"><path d="M5 9.500000H10M5 11.5H10M5 13.5H10M5 15.5H10M5 17.5H10M5 19.5H10M5 21.5H10M5 23.5H10M5 25.5H10M5 27.5H10M5 29.5H10M5 31.5H10M5 33.5H10" stroke="#3a3e4c"/><path d="M5 35.5H10M5 37.5H10M5 39.5H10M5 41.5H10M5 43.5H10" stroke="#c8c050"/><path d="M5 45.5H10M5 47.5H10M5 49.5H10M5 51.5H10" stroke="#8cc060"/><path d="M5 53.5H10M5 55.5H10M5 57.5H10M5 59.5H10M5 61.5H10M5 63.5H10" stroke="#40c8a8"/></g></svg>
<div id="botline" class="abs"><i style="left:60px;width:430px"></i></div>
</body>
</html>
